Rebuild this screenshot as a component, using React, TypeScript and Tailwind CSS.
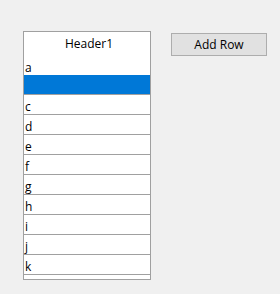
export default function App() {
  const rows = ["c", "d", "e", "f", "g", "h", "i", "j", "k"];
  return (
    <div
      className="w-[280px] h-[294px] bg-[#f0f0f0] flex items-start text-[12px] text-black"
      style={{ fontFamily: '"Open Sans", "Noto Sans", sans-serif' }}
    >
      <div className="ml-[23px] mt-[31px] w-[128px] h-[249px] border border-[#a0a0a0] bg-white flex flex-col overflow-hidden">
        <div className="h-[24px] shrink-0 flex items-center justify-center pl-[4px] leading-none">Header1</div>
        <div className="h-[19px] shrink-0 pl-[1px] leading-[19px] pt-[2px]">a</div>
        <div className="h-[20px] shrink-0 bg-[#0078d7] border-b border-[#a0a0a0]"></div>
        {rows.map((r) => (
          <div key={r} className="h-[20px] shrink-0 pl-[1px] border-b border-[#a0a0a0] leading-[19px] pt-[2px]">
            {r}
          </div>
        ))}
      </div>
      <div className="ml-[20px] mt-[33px] w-[96px] h-[23px] border border-[#adadad] bg-[#e1e1e1] flex items-center justify-center leading-none">
        Add Row
      </div>
    </div>
  );
}
